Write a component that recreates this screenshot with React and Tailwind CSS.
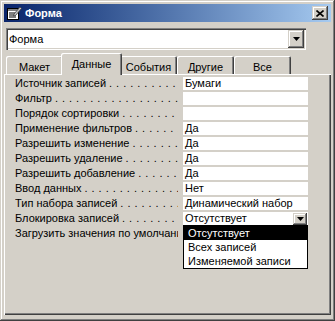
const font = "font-['Tahoma','Liberation_Sans',sans-serif]";

const raised = 'shadow-[inset_-1px_-1px_#404040,inset_1px_1px_#d4d0c8,inset_-2px_-2px_#808080,inset_2px_2px_#ffffff]';
const sunken = 'shadow-[inset_1px_1px_#808080,inset_2px_2px_#404040,inset_-1px_-1px_#ffffff,inset_-2px_-2px_#d4d0c8]';

const rows = [
  ['Источник записей', 'Бумаги'],
  ['Фильтр', ''],
  ['Порядок сортировки', ''],
  ['Применение фильтров', 'Да'],
  ['Разрешить изменение', 'Да'],
  ['Разрешить удаление', 'Да'],
  ['Разрешить добавление', 'Да'],
  ['Ввод данных', 'Нет'],
  ['Тип набора записей', 'Динамический набор'],
  ['Блокировка записей', 'Отсутствует', true],
  ['Загрузить значения по умолчанию', ''],
];

const tabs = ['Макет', 'Данные', 'События', 'Другие', 'Все'];

function DownArrow() {
  return (
    <svg width="7" height="4" viewBox="0 0 7 4">
      <path d="M0 0h7L3.5 4z" fill="#000" />
    </svg>
  );
}

function FormIcon() {
  return (
    <svg width="16" height="16" viewBox="0 0 16 16" className="shrink-0">
      <rect x="1.5" y="3.5" width="11" height="11" fill="#fff" stroke="#000" />
      <rect x="2" y="4" width="10" height="2" fill="#808080" />
      <path d="M3 8h7M3 10h7M3 12h7" stroke="#000" />
      <path d="M8 9l6-7 1.5 1.5-6 7-2 .5z" fill="#c0c0c0" stroke="#404040" strokeWidth="0.8" />
    </svg>
  );
}

export default function App() {
  return (
    <div className={`w-[335px] h-[321px] bg-[#d4d0c8] p-[4px] flex flex-col text-[11px] text-black ${font} ${raised}`}>
      {/* title bar */}
      <div className="h-[18px] flex items-center pl-[2px] pr-[3px] bg-gradient-to-r from-[#0a246a] to-[#a6caf0]">
        <FormIcon />
        <span className="ml-[3px] font-bold text-white leading-none">Форма</span>
        <div className={`ml-auto w-[16px] h-[14px] bg-[#d4d0c8] flex items-center justify-center ${raised}`}>
          <svg width="8" height="7" viewBox="0 0 8 7">
            <path d="M0.5 0.5l7 6M7.5 0.5l-7 6" stroke="#000" strokeWidth="1.6" />
          </svg>
        </div>
      </div>

      {/* object combo */}
      <div className={`mt-[6px] ml-[2px] w-[300px] h-[22px] bg-white flex items-center pl-[3px] pr-[2px] ${sunken}`}>
        <span>Форма</span>
        <div className={`ml-auto w-[16px] h-[18px] bg-[#d4d0c8] flex items-center justify-center ${raised}`}>
          <DownArrow />
        </div>
      </div>

      {/* tabs */}
      <div className="mt-[3px] h-[21px] pl-[2px] flex items-end">
        {tabs.map((t) =>
          t === 'Данные' ? (
            <div
              key={t}
              className="relative z-10 w-[61px] -mx-[2px] h-[22px] -mb-[1px] bg-[#d4d0c8] rounded-t-[2px] flex items-start justify-center pt-[3px] shadow-[inset_1px_1px_#ffffff,inset_-1px_0_#404040,inset_-2px_0_#808080]"
            >
              {t}
            </div>
          ) : (
            <div
              key={t}
              className="w-[57px] h-[18px] bg-[#d4d0c8] rounded-t-[2px] flex items-start justify-center pt-[3px] shadow-[inset_1px_1px_#ffffff,inset_-1px_0_#404040,inset_-2px_0_#808080]"
            >
              {t}
            </div>
          )
        )}
      </div>

      {/* property panel */}
      <div className="flex-1 mb-[2px] pt-[3px] pl-[11px] shadow-[inset_1px_1px_#ffffff,inset_-1px_-1px_#404040,inset_-2px_-2px_#808080]">
        {rows.map(([label, value, combo]) => (
          <div key={label} className="flex h-[13px] mb-[2px] leading-[13px]">
            <div className="w-[163px] overflow-hidden whitespace-nowrap flex">
              <span className="shrink-0">{label}</span>
              <span className="shrink-0 ml-[3px] tracking-[4px]">{'.'.repeat(30)}</span>
            </div>
            <div className="relative ml-[5px] w-[125px] bg-white pl-[2px] flex items-center">
              <span>{value}</span>
              {combo && (
                <>
                  <div className={`ml-auto mr-[1px] w-[14px] h-[12px] bg-[#d4d0c8] flex items-center justify-center ${raised}`}>
                    <DownArrow />
                  </div>
                  <div className="absolute left-0 top-[13px] z-20 w-[125px] bg-white border border-black">
                    <div className="h-[14px] leading-[14px] pl-[4px] bg-black text-white">Отсутствует</div>
                    <div className="h-[14px] leading-[14px] pl-[4px]">Всех записей</div>
                    <div className="h-[14px] leading-[14px] pl-[4px]">Изменяемой записи</div>
                  </div>
                </>
              )}
            </div>
          </div>
        ))}
      </div>
    </div>
  );
}
